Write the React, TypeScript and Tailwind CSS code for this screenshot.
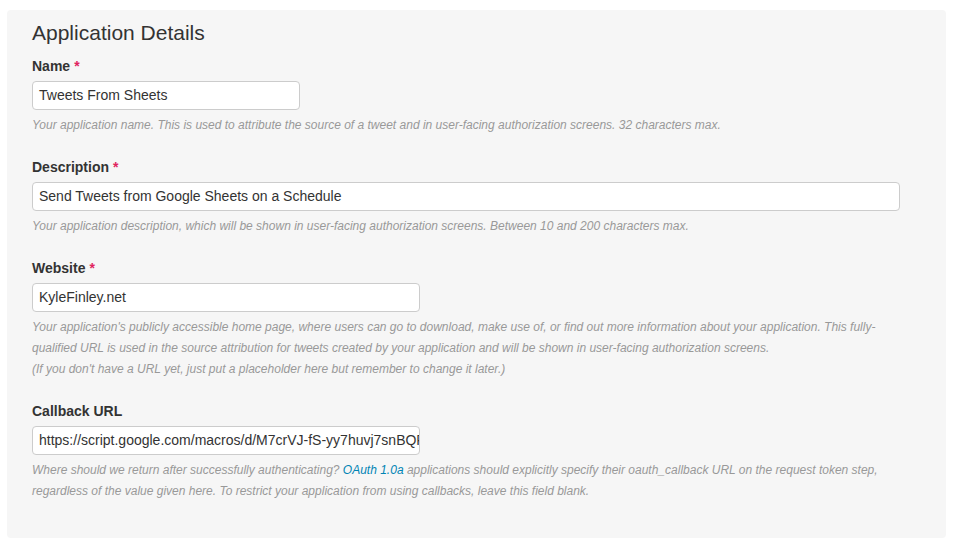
import React from "react";

function Label({ text, required }: { text: string; required?: boolean }) {
  return (
    <div className="h-5 leading-5 text-[14px] font-bold text-[#333]">
      {text}
      {required && <span className="ml-[4px] text-[#e0245e]">*</span>}
    </div>
  );
}

function Field({ value, width }: { value: string; width: string }) {
  return (
    <div
      className={`mt-[5px] h-[29px] ${width} rounded-[4px] border border-[#cccccc] bg-white pl-[6px] pr-[2px] overflow-hidden whitespace-nowrap text-[14px] leading-[27px] text-[#333]`}
    >
      {value}
    </div>
  );
}

function Help({ children }: { children: React.ReactNode }) {
  return (
    <div className="mt-[5px] text-[12px] leading-[21px] italic text-[#999999] whitespace-nowrap">
      {children}
    </div>
  );
}

export default function App() {
  return (
    <div
      className="w-[955px] h-[544px] bg-white pt-[10px] pl-[7px]"
      style={{ fontFamily: '"Liberation Sans", Arial, sans-serif' }}
    >
      <div className="w-[939px] h-[528px] rounded-[4px] bg-[#f6f6f6] pt-[9px] pl-[25px]">
        <div className="h-[28px] leading-[28px] text-[21px] text-[#333]">Application Details</div>
        <div className="mt-[9px] flex flex-col">
          <div className="mb-[21px]">
            <Label text="Name" required />
            <Field value="Tweets From Sheets" width="w-[268px]" />
            <Help>
              Your application name. This is used to attribute the source of a tweet and in user-facing authorization screens. 32 characters max.
            </Help>
          </div>
          <div className="mb-[21px]">
            <Label text="Description" required />
            <Field value="Send Tweets from Google Sheets on a Schedule" width="w-[868px]" />
            <Help>
              Your application description, which will be shown in user-facing authorization screens. Between 10 and 200 characters max.
            </Help>
          </div>
          <div className="mb-[21px]">
            <Label text="Website" required />
            <Field value="KyleFinley.net" width="w-[388px]" />
            <Help>
              Your application's publicly accessible home page, where users can go to download, make use of, or find out more information about your application. This fully-
              <br />
              qualified URL is used in the source attribution for tweets created by your application and will be shown in user-facing authorization screens.
              <br />
              (If you don't have a URL yet, just put a placeholder here but remember to change it later.)
            </Help>
          </div>
          <div>
            <Label text="Callback URL" />
            <Field
              value="https://script.google.com/macros/d/M7crVJ-fS-yy7huvj7snBQPXqsm8LsjOz/usercallback"
              width="w-[388px]"
            />
            <Help>
              Where should we return after successfully authenticating?{" "}
              <a className="text-[#0084b4]">OAuth 1.0a</a> applications should explicitly specify their oauth_callback URL on the request token step,
              <br />
              regardless of the value given here. To restrict your application from using callbacks, leave this field blank.
            </Help>
          </div>
        </div>
      </div>
    </div>
  );
}
